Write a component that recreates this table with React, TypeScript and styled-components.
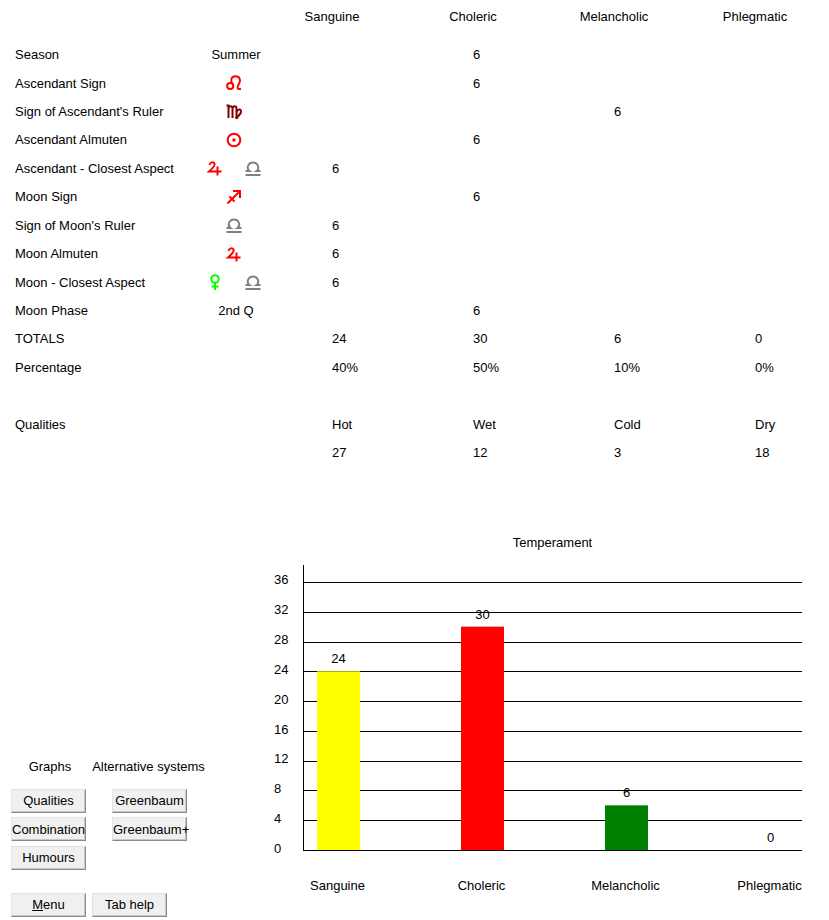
import React from 'react';
import styled, { createGlobalStyle } from 'styled-components';

const Global = createGlobalStyle`
  html, body { margin: 0; padding: 0; background: #ffffff; }
  body {
    font-family: "Liberation Sans", Arial, sans-serif;
    font-size: 13px;
    color: #000000;
  }
  * { box-sizing: border-box; }
`;

const Page = styled.div`
  width: 829px;
  height: 920px;
  overflow: hidden;
`;

const HeaderRow = styled.div`
  display: flex;
  align-items: center;
  height: 32px;
  padding-left: 261.5px;
`;

const HeaderCell = styled.div`
  width: 141px;
  text-align: center;
  white-space: nowrap;
`;

const Table = styled.div`
  margin-top: 8.4px;
  display: flex;
  flex-direction: column;
`;

const Row = styled.div`
  display: grid;
  grid-template-columns: 181px 80px 56px 141px 141px 141px 1fr;
  height: 28.45px;
  align-items: center;
  padding-left: 15px;
`;

const Label = styled.div`
  white-space: nowrap;
`;

const GlyphCell = styled.div<{ $icons: boolean }>`
  display: flex;
  justify-content: center;
  align-items: center;
  gap: 22px;
  white-space: nowrap;
  padding-right: ${(p) => (p.$icons ? '4px' : '0')};
`;

const IconSvg = styled.svg`
  display: block;
  width: 16px;
  height: 16px;
  flex: none;
  overflow: visible;
`;

const Value = styled.div`
  white-space: nowrap;
`;

const Bottom = styled.div`
  margin-top: 52.8px;
  display: flex;
  height: 380px;
`;

const Side = styled.div`
  width: 260px;
  padding: 239.5px 0 0 11px;
  display: flex;
  flex-direction: column;
`;

const Groups = styled.div`
  display: flex;
  gap: 26px;
`;

const Group = styled.div<{ $shift: number }>`
  width: 75px;
  display: flex;
  flex-direction: column;
  align-items: center;
  & > div:first-child {
    transform: translateX(${(p) => p.$shift}px);
  }
`;

const GroupLabel = styled.div`
  white-space: nowrap;
  line-height: 15px;
  height: 15px;
  margin-bottom: 14.5px;
`;

const ButtonStack = styled.div`
  display: flex;
  flex-direction: column;
  gap: 4.5px;
`;

const Btn = styled.button`
  width: 75px;
  height: 24px;
  padding: 0;
  margin: 0;
  font-family: "Liberation Sans", Arial, sans-serif;
  font-size: 13px;
  color: #000;
  background: #f0f0f0;
  border-style: solid;
  border-width: 1px;
  border-color: #e3e3e3 #8a8a8a #8a8a8a #e3e3e3;
  box-shadow: inset -1px -1px 0 #c8c8c8;
  white-space: nowrap;
  overflow: visible;
  cursor: pointer;
`;

const Footer = styled.div`
  display: flex;
  gap: 6px;
  margin-top: 23px;
`;

const ChartSvg = styled.svg`
  display: block;
  font-family: "Liberation Sans", Arial, sans-serif;
  font-size: 13px;
`;

type IconKind = 'leo' | 'virgo' | 'sun' | 'jupiter' | 'libra' | 'sag' | 'venus';

const iconColor: Record<IconKind, string> = {
  leo: '#ff0000',
  virgo: '#800000',
  sun: '#ff0000',
  jupiter: '#ff0000',
  libra: '#808080',
  sag: '#ff0000',
  venus: '#00ff00',
};

const AstroIcon: React.FC<{ kind: IconKind }> = ({ kind }) => {
  const c = iconColor[kind];
  const common = {
    fill: 'none',
    stroke: c,
    strokeWidth: 2,
    strokeLinecap: 'butt' as const,
    strokeLinejoin: 'miter' as const,
  };
  let body: React.ReactNode = null;
  switch (kind) {
    case 'leo':
      body = (
        <>
          <circle cx={4.2} cy={11} r={3.1} {...common} />
          <path
            d="M6.3 8.8 C4.2 5.5 5.2 1.2 9.5 1.2 C13.8 1.2 14.8 5 13.3 8 L11.8 11.2 C11 13.6 12.2 14.8 15 13.6"
            {...common}
          />
        </>
      );
      break;
    case 'virgo':
      body = (
        <>
          <path d="M0.5 2.5 L2.5 2.5 L2.5 15" {...common} />
          <path d="M2.5 5 Q4 2.5 5.5 3.5 Q6.5 4 6.5 5.5 L6.5 15" {...common} />
          <path d="M6.5 5 Q8 2.5 9.5 3.5 Q10.5 4 10.5 5.5 L10.5 14 Q10.5 15.5 12 14.5" {...common} />
          <path d="M10.5 9 C12 5.5 15.5 6 15 9 C14.5 11.5 12.5 13 9.5 15.5" {...common} />
        </>
      );
      break;
    case 'sun':
      body = (
        <>
          <circle cx={8} cy={8} r={6.3} {...common} />
          <circle cx={8} cy={8} r={1.7} fill={c} />
        </>
      );
      break;
    case 'jupiter':
      body = (
        <>
          <path d="M2.5 5 C3 2 6.5 1.5 7.5 3.5 C8.5 5.5 6 8 2 11.5 L14.5 11.5" {...common} />
          <path d="M10.5 6.5 L10.5 15.5" {...common} />
        </>
      );
      break;
    case 'libra':
      body = (
        <>
          <path d="M0.5 15 L15.5 15" {...common} />
          <path
            d="M0.5 11 L4.5 11 C2.5 9.5 2.5 7.5 3 6 C4 3.5 6 2.5 8 2.5 C10 2.5 12 3.5 13 6 C13.5 7.5 13.5 9.5 11.5 11 L15.5 11"
            {...common}
          />
        </>
      );
      break;
    case 'sag':
      body = (
        <>
          <path d="M1.5 14.5 L14 2" {...common} />
          <path d="M7 2 L14 2 L14 9" {...common} />
          <path d="M3.5 7.5 L8.5 12.5" {...common} />
        </>
      );
      break;
    case 'venus':
      body = (
        <>
          <circle cx={8} cy={5} r={3.8} {...common} />
          <path d="M8 8.8 L8 16" {...common} />
          <path d="M4.5 12.5 L11.5 12.5" {...common} />
        </>
      );
      break;
  }
  return (
    <IconSvg viewBox="0 0 16 16" aria-hidden="true">
      {body}
    </IconSvg>
  );
};

type RowData = {
  label: string;
  mid?: string;
  icons?: IconKind[];
  vals: string[];
};

const rows: (RowData | null)[] = [
  { label: 'Season', mid: 'Summer', vals: ['', '6', '', ''] },
  { label: 'Ascendant Sign', icons: ['leo'], vals: ['', '6', '', ''] },
  { label: "Sign of Ascendant's Ruler", icons: ['virgo'], vals: ['', '', '6', ''] },
  { label: 'Ascendant Almuten', icons: ['sun'], vals: ['', '6', '', ''] },
  { label: 'Ascendant - Closest Aspect', icons: ['jupiter', 'libra'], vals: ['6', '', '', ''] },
  { label: 'Moon Sign', icons: ['sag'], vals: ['', '6', '', ''] },
  { label: "Sign of Moon's Ruler", icons: ['libra'], vals: ['6', '', '', ''] },
  { label: 'Moon Almuten', icons: ['jupiter'], vals: ['6', '', '', ''] },
  { label: 'Moon - Closest Aspect', icons: ['venus', 'libra'], vals: ['6', '', '', ''] },
  { label: 'Moon Phase', mid: '2nd Q', vals: ['', '6', '', ''] },
  { label: 'TOTALS', vals: ['24', '30', '6', '0'] },
  { label: 'Percentage', vals: ['40%', '50%', '10%', '0%'] },
  null,
  { label: 'Qualities', vals: ['Hot', 'Wet', 'Cold', 'Dry'] },
  { label: '', vals: ['27', '12', '3', '18'] },
];

const headers = ['Sanguine', 'Choleric', 'Melancholic', 'Phlegmatic'];

const bars = [
  { name: 'Sanguine', value: 24, color: '#ffff00' },
  { name: 'Choleric', value: 30, color: '#ff0000' },
  { name: 'Melancholic', value: 6, color: '#008000' },
  { name: 'Phlegmatic', value: 0, color: '#0000ff' },
];

const Chart: React.FC = () => {
  const zeroY = 850;
  const unit = (850 - 582) / 36;
  const ticks = [36, 32, 28, 24, 20, 16, 12, 8, 4, 0];
  return (
    <ChartSvg width={569} height={380} viewBox="260 520 569 380">
      <text x={552.5} y={547} textAnchor="middle" fill="#000">
        Temperament
      </text>
      {ticks.map((t, i) => {
        const y = Math.round(zeroY - t * unit) + 0.5;
        return (
          <g key={t}>
            <line x1={303} x2={802} y1={y} y2={y} stroke="#000" strokeWidth={1} />
            <text x={274} y={584 + i * 29.9} fill="#000">
              {t}
            </text>
          </g>
        );
      })}
      <line x1={303.5} x2={303.5} y1={565} y2={850.5} stroke="#000" strokeWidth={1} />
      {bars.map((b, i) => {
        const x = 317 + i * 144;
        const top = zeroY - b.value * unit;
        const cx = x + 21.5;
        return (
          <g key={b.name}>
            {b.value > 0 && (
              <rect x={x} y={top} width={43} height={zeroY - top} fill={b.color} />
            )}
            <text x={cx} y={top - 8} textAnchor="middle" fill="#000">
              {b.value}
            </text>
            <text x={cx - 1} y={890} textAnchor="middle" fill="#000">
              {b.name}
            </text>
          </g>
        );
      })}
    </ChartSvg>
  );
};

export default function App() {
  return (
    <Page>
      <Global />
      <HeaderRow>
        {headers.map((h) => (
          <HeaderCell key={h}>{h}</HeaderCell>
        ))}
      </HeaderRow>
      <Table>
        {rows.map((r, i) =>
          r === null ? (
            <Row key={i} />
          ) : (
            <Row key={i}>
              <Label>{r.label}</Label>
              <GlyphCell $icons={!!r.icons}>
                {r.mid}
                {r.icons?.map((k, j) => (
                  <AstroIcon key={j} kind={k} />
                ))}
              </GlyphCell>
              <div />
              {r.vals.map((v, j) => (
                <Value key={j}>{v}</Value>
              ))}
            </Row>
          )
        )}
      </Table>
      <Bottom>
        <Side>
          <Groups>
            <Group $shift={1.5}>
              <GroupLabel>Graphs</GroupLabel>
              <ButtonStack>
                <Btn>Qualities</Btn>
                <Btn>Combination</Btn>
                <Btn>Humours</Btn>
              </ButtonStack>
            </Group>
            <Group $shift={-1}>
              <GroupLabel>Alternative systems</GroupLabel>
              <ButtonStack>
                <Btn>Greenbaum</Btn>
                <Btn>Greenbaum+</Btn>
              </ButtonStack>
            </Group>
          </Groups>
          <Footer>
            <Btn>
              <u>M</u>enu
            </Btn>
            <Btn>Tab help</Btn>
          </Footer>
        </Side>
        <Chart />
      </Bottom>
    </Page>
  );
}
